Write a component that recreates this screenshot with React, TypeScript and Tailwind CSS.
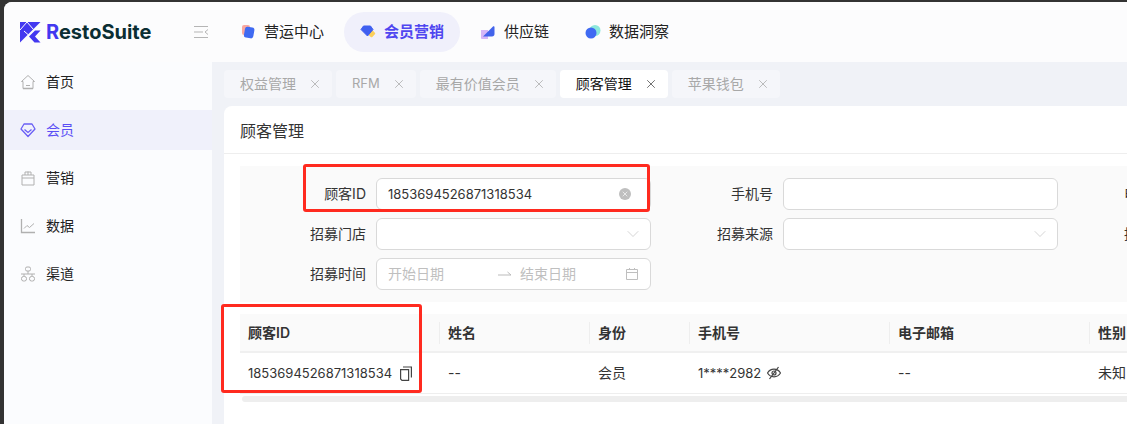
import { ChevronDown, X } from 'lucide-react';

const FONT = "font-['Inter','Noto_Sans_CJK_SC',sans-serif]";

const topNav = [
  { label: '营运中心', icon: 'ops' },
  { label: '会员营销', icon: 'member', active: true },
  { label: '供应链', icon: 'supply' },
  { label: '数据洞察', icon: 'insight' },
];

const tabs = [
  { label: '权益管理' },
  { label: 'RFM' },
  { label: '最有价值会员' },
  { label: '顾客管理', active: true },
  { label: '苹果钱包' },
];

const sideNav = [
  { label: '首页', icon: 'home' },
  { label: '会员', icon: 'gem', active: true },
  { label: '营销', icon: 'bag' },
  { label: '数据', icon: 'chart' },
  { label: '渠道', icon: 'tree' },
];

const columns = [
  { label: '顾客ID', width: 'w-[200px]' },
  { label: '姓名', width: 'w-[150px]' },
  { label: '身份', width: 'w-[100px]' },
  { label: '手机号', width: 'w-[200px]' },
  { label: '电子邮箱', width: 'w-[200px]' },
  { label: '性别', width: 'w-[200px]' },
];

const Logo = () => (
  <svg width="21" height="21" viewBox="0 0 21 21" className="shrink-0">
    <path d="M0 0h20.500L13 7.500 0 20.500z" fill="#4338f0" />
    <path d="M7 0l6.500 7.500M7 0L0 8M4 9l4.500 4" stroke="#fff" strokeWidth="1" fill="none" />
    <path d="M20.500 8.500h-5.500L9 14.500l5.500 6h6L15 14.500z" fill="#4338f0" />
  </svg>
);

const TopIcon = ({ name }: { name: string }) => {
  if (name === 'ops') {
    return (
      <svg width="16" height="16" viewBox="0 0 16 16" className="shrink-0">
        <rect x="2" y="1" width="8" height="10" rx="2" fill="#f9a8a0" />
        <rect x="4.500" y="3" width="9.500" height="11" rx="2.500" fill="#3f6af2" transform="rotate(10 9 8)" />
      </svg>
    );
  }
  if (name === 'member') {
    return (
      <svg width="16" height="16" viewBox="0 0 16 16" className="shrink-0">
        <rect x="8.500" y="6.500" width="6" height="6" rx="1.200" fill="#fbcf5b" transform="rotate(45 11.500 9.500)" />
        <path d="M3.500 2h7l2.500 3.500-5.500 6.500L1 5.500z" fill="#3f5ff0" stroke="#3f5ff0" strokeLinejoin="round" />
      </svg>
    );
  }
  if (name === 'supply') {
    return (
      <svg width="16" height="16" viewBox="0 0 16 16" className="shrink-0">
        <path d="M1 6h7v9H2a1 1 0 0 1-1-1z" fill="#d5b6f7" />
        <path d="M3 12.500L13 2.500c.800-.500 1.500 0 1.500 1V10c0 1.500-1 2.500-2.500 2.500z" fill="#4263eb" />
      </svg>
    );
  }
  return (
    <svg width="16" height="16" viewBox="0 0 16 16" className="shrink-0">
      <circle cx="10" cy="6.500" r="5.500" fill="#8ce8dc" />
      <circle cx="6" cy="9" r="5.500" fill="#3f6af2" />
    </svg>
  );
};

const SideIcon = ({ name, active }: { name: string; active?: boolean }) => {
  const stroke = active ? '#6a5ff5' : '#b0b0b0';
  const common = { width: 16, height: 16, viewBox: '0 0 16 16', fill: 'none', stroke, strokeWidth: 1, className: 'shrink-0' };
  if (name === 'home') {
    return (
      <svg {...common}>
        <path d="M1.500 7.500L8 1.500l6.500 6H13v7H3v-7z" strokeLinejoin="round" />
        <path d="M6 11.500h4" />
        <path d="M3 14.500h10" strokeWidth={1.500} />
      </svg>
    );
  }
  if (name === 'gem') {
    return (
      <svg {...common} strokeWidth={1.300}>
        <path d="M4 2h8l3 5-7 7.500L1 7z" strokeLinejoin="round" />
        <path d="M4.500 7.500L8 10.500l3.500-3" />
      </svg>
    );
  }
  if (name === 'bag') {
    return (
      <svg {...common}>
        <path d="M2 5h12v10H2zM8 5V1.500M5 5V2h6v3M2 8h12" />
      </svg>
    );
  }
  if (name === 'chart') {
    return (
      <svg {...common}>
        <path d="M1.500 1v13.500H15" strokeWidth={1.300} />
        <path d="M4 10.500l3-3 2.500 2L14 5.500" />
      </svg>
    );
  }
  return (
    <svg {...common}>
      <rect x="5.500" y="1" width="5" height="4" rx="1.500" />
      <rect x="1.500" y="10.500" width="5" height="4.500" rx="2" />
      <rect x="9.500" y="10.500" width="5" height="4.500" rx="2" />
      <path d="M1 8h14M8 5v3M4 8v2.500M12 8v2.500" />
    </svg>
  );
};

const CopyIcon = () => (
  <svg width="12" height="15" viewBox="0 0 12 15" fill="none" stroke="#444" strokeWidth="1.200" className="shrink-0">
    <path d="M.6 3.600h8v10.800H2L.6 13z" />
    <path d="M3 1h8.400v10.500" />
  </svg>
);

const EyeOffIcon = () => (
  <svg width="14" height="14" viewBox="0 0 14 14" fill="none" stroke="#444" strokeWidth="1.200" className="shrink-0">
    <path d="M.5 7C2 4.500 4.300 3.200 7 3.200S12 4.500 13.500 7C12 9.500 9.700 10.800 7 10.800S2 9.500.5 7z" />
    <circle cx="7" cy="7" r="2" />
    <path d="M2.500 13l9-12" />
  </svg>
);

const CalendarIcon = () => (
  <svg width="14" height="14" viewBox="0 0 14 14" fill="none" stroke="#bfbfbf" className="shrink-0">
    <path d="M1.500 2.500h11v10h-11zM1.500 5.500h11M4.500 1v2M9.500 1v2" />
  </svg>
);

const Input = ({ children }: { children?: React.ReactNode }) => (
  <div className="flex h-8 w-[275px] items-center rounded-md border border-[#d9d9d9] bg-white px-[11px] text-sm text-[#333]">
    {children}
  </div>
);

const Field = ({ label, children }: { label: string; children?: React.ReactNode }) => (
  <div className="flex h-8 w-[407px] shrink-0 items-center">
    <div className="w-[122px] shrink-0 text-right text-sm text-[#333]">{label}</div>
    <div className="ml-[10px]">{children}</div>
  </div>
);

const Select = () => (
  <Input>
    <ChevronDown size={20} strokeWidth={0.8} className="ml-auto mr-[-4px] text-[#bfbfbf]" />
  </Input>
);

export default function App() {
  return (
    <div className={`h-screen w-screen overflow-hidden bg-[#333] pl-1 pt-[2px] ${FONT}`}>
      <div className="relative flex h-full flex-col overflow-hidden rounded-tl-lg bg-[#fbfcfe]">
        {/* top bar */}
        <header className="flex h-[60px] shrink-0 items-center bg-[#fcfcfd]">
          <div className="ml-4 flex w-[172px] shrink-0 items-center gap-[5px]">
            <Logo />
            <span className="text-[20px] font-bold text-[#0b2e33]">
              <span className="text-[#4338f0]">R</span>estoSuite
            </span>
          </div>
          <svg width="14" height="14" viewBox="0 0 14 14" fill="none" stroke="#b5b5b5" className="ml-[2px] shrink-0">
            <path d="M0 1.500h14M0 7h9M0 12.500h14" />
            <path d="M14 4.500L11 7l3 2.500" />
          </svg>
          <nav className="ml-4 flex gap-1">
            {topNav.map((item) => (
              <div
                key={item.label}
                className={`flex h-10 items-center gap-2 rounded-[20px] px-4 text-[15px] ${
                  item.active ? 'bg-[#f0f0fb] font-bold text-[#4f46f0]' : 'text-[#222]'
                }`}
              >
                <TopIcon name={item.icon} />
                {item.label}
              </div>
            ))}
          </nav>
        </header>

        <div className="flex min-h-0 flex-1">
          {/* side menu */}
          <aside className="flex w-52 shrink-0 flex-col gap-2 bg-[#fbfcfe]">
            {sideNav.map((item) => (
              <div
                key={item.label}
                className={`flex h-10 items-center gap-[10px] px-4 text-sm ${
                  item.active ? 'bg-[#f0f1fb] text-[#5b4ff5]' : 'text-[#222]'
                }`}
              >
                <SideIcon name={item.icon} active={item.active} />
                {item.label}
              </div>
            ))}
          </aside>

          <main className="flex min-w-0 flex-1 flex-col gap-2 bg-[#f0f2f7] pl-3 pt-2">
            {/* tabs */}
            <div className="flex h-7 shrink-0 gap-1">
              {tabs.map((tab) => (
                <div
                  key={tab.label}
                  className={`flex items-center gap-3 rounded pl-4 pr-[10px] ${
                    tab.label === 'RFM' ? 'text-[13px]' : 'text-sm'
                  } ${tab.active ? 'bg-white text-[#111]' : 'bg-[#f5f6fa] text-[#a8a8a8]'}`}
                >
                  {tab.label}
                  <X size={14} strokeWidth={1.100} className={tab.active ? 'text-[#222]' : 'text-[#999]'} />
                </div>
              ))}
            </div>

            {/* card */}
            <section className="min-h-0 flex-1 rounded-tl-lg bg-white">
              <div className="flex h-12 items-center border-b border-[#eeeeee] pl-4 pt-[2px] text-base text-[#333]">
                顾客管理
              </div>

              <div className="ml-4 mt-3 flex h-[136px] flex-col gap-2 overflow-hidden bg-[#fafafa] pl-1 pt-3">
                <div className="flex">
                  <Field label="顾客ID">
                    <Input>
                      <span className="flex-1 text-[13px]">1853694526871318534</span>
                      <span className="mr-2 flex h-3 w-3 items-center justify-center rounded-full bg-[#bfbfbf]">
                        <X size={8} strokeWidth={2} className="text-white" />
                      </span>
                    </Input>
                  </Field>
                  <Field label="手机号">
                    <Input />
                  </Field>
                  <Field label="电子邮箱">
                    <Input />
                  </Field>
                </div>
                <div className="flex">
                  <Field label="招募门店">
                    <Select />
                  </Field>
                  <Field label="招募来源">
                    <Select />
                  </Field>
                  <Field label="招募渠道">
                    <Select />
                  </Field>
                </div>
                <div className="flex">
                  <Field label="招募时间">
                    <Input>
                      <span className="w-[110px] text-[#bfbfbf]">开始日期</span>
                      <svg width="14" height="8" viewBox="0 0 14 8" fill="none" stroke="#bbb" className="shrink-0">
                        <path d="M0 5h13L9.500 2" />
                      </svg>
                      <span className="ml-[8px] w-[105px] text-[#bfbfbf]">结束日期</span>
                      <CalendarIcon />
                    </Input>
                  </Field>
                </div>
              </div>

              {/* table */}
              <div className="ml-4 mt-3 w-[1100px]">
                <div className="flex h-[39px] border-b-2 border-[#f0f0f0] bg-[#fafafa] text-sm font-semibold text-[#333]">
                  {columns.map((col, i) => (
                    <div key={col.label} className={`flex shrink-0 items-center justify-between pl-2 ${col.width}`}>
                      {col.label}
                      {i < columns.length - 1 && <span className="h-[22px] w-px bg-[#eeeeee]" />}
                    </div>
                  ))}
                </div>
                <div className="flex h-[41px] items-center border-b border-[#eeeeee] text-sm text-[#333]">
                  <div className="flex w-[200px] shrink-0 items-center gap-[8px] pl-2 text-[13px]">
                    1853694526871318534
                    <CopyIcon />
                  </div>
                  <div className="w-[150px] shrink-0 pl-2">--</div>
                  <div className="w-[100px] shrink-0 pl-2">会员</div>
                  <div className="flex w-[200px] shrink-0 items-center gap-[6px] pl-2 text-[13px]">
                    1****2982
                    <EyeOffIcon />
                  </div>
                  <div className="w-[200px] shrink-0 pl-2">--</div>
                  <div className="w-[200px] shrink-0 pl-2">未知</div>
                </div>
                <div className="ml-[2px] mt-[2px] h-[6px] rounded-full bg-[#eeeeee]" />
              </div>
            </section>
          </main>
        </div>

        {/* red annotation boxes from the screenshot */}
        <div className="absolute left-[299px] top-[162px] h-[48px] w-[347px] rounded-[3px] border-[3px] border-[#ff2a1f]" />
        <div className="absolute left-[217px] top-[302px] h-[89px] w-[201px] rounded-[3px] border-[3px] border-[#ff2a1f]" />
      </div>
    </div>
  );
}
